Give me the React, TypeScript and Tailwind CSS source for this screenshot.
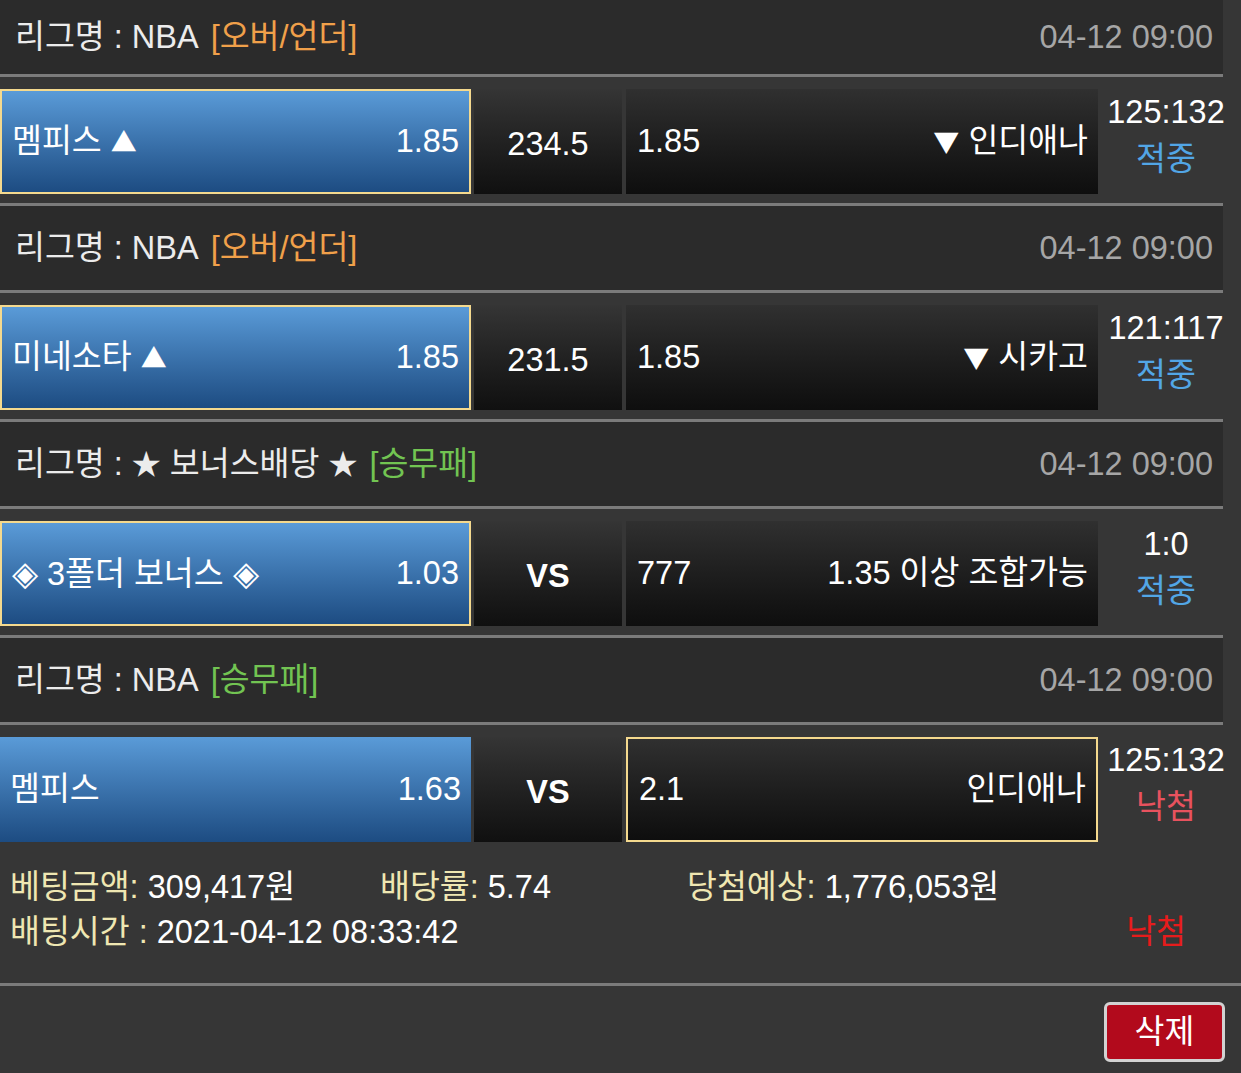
import React from "react";

type Match = {
  league: React.ReactNode;
  tag: string;
  tagColor: string;
  home: React.ReactNode;
  homeOdd: string;
  homeSel: boolean;
  mid: string;
  midBold?: boolean;
  awayOdd: string;
  away: React.ReactNode;
  awaySel: boolean;
  score: string;
  status: string;
  statusColor: string;
};

const Star = () => <span className="text-[29px]">★</span>;
const Up = () => <span className="font-['Noto_Sans_CJK_KR'] text-[26px]">▲</span>;
const Down = () => <span className="font-['Noto_Sans_CJK_KR'] text-[26px]">▼</span>;
const Dia = () => <span className="text-[34px]">◈</span>;

const matches: Match[] = [
  {
    league: "리그명 : NBA",
    tag: "[오버/언더]",
    tagColor: "text-[#f0a04a]",
    home: (
      <>
        멤피스 <Up />
      </>
    ),
    homeOdd: "1.85",
    homeSel: true,
    mid: "234.5",
    awayOdd: "1.85",
    away: (
      <>
        <Down /> 인디애나
      </>
    ),
    awaySel: false,
    score: "125:132",
    status: "적중",
    statusColor: "text-[#52a6e6]",
  },
  {
    league: "리그명 : NBA",
    tag: "[오버/언더]",
    tagColor: "text-[#f0a04a]",
    home: (
      <>
        미네소타 <Up />
      </>
    ),
    homeOdd: "1.85",
    homeSel: true,
    mid: "231.5",
    awayOdd: "1.85",
    away: (
      <>
        <Down /> 시카고
      </>
    ),
    awaySel: false,
    score: "121:117",
    status: "적중",
    statusColor: "text-[#52a6e6]",
  },
  {
    league: (
      <>
        리그명 : <Star /> 보너스배당 <Star />
      </>
    ),
    tag: "[승무패]",
    tagColor: "text-[#72c452]",
    home: (
      <>
        <Dia /> 3폴더 보너스 <Dia />
      </>
    ),
    homeOdd: "1.03",
    homeSel: true,
    mid: "VS",
    midBold: true,
    awayOdd: "777",
    away: "1.35 이상 조합가능",
    awaySel: false,
    score: "1:0",
    status: "적중",
    statusColor: "text-[#52a6e6]",
  },
  {
    league: "리그명 : NBA",
    tag: "[승무패]",
    tagColor: "text-[#72c452]",
    home: "멤피스",
    homeOdd: "1.63",
    homeSel: false,
    mid: "VS",
    midBold: true,
    awayOdd: "2.1",
    away: "인디애나",
    awaySel: true,
    score: "125:132",
    status: "낙첨",
    statusColor: "text-[#e8525e]",
  },
];

export default function App() {
  return (
    <div className="min-h-[1073px] w-full bg-[#363636] text-[32.5px] leading-none text-[#ececec] font-['Liberation_Sans','Noto_Sans_CJK_KR',sans-serif] overflow-hidden">
      <div className="w-[1223px]">
        {matches.map((m, i) => (
          <div key={i}>
            <div
              className={
                i === 0
                  ? "flex h-[77px] items-center justify-between border-b-[3px] border-[#7b7b7b] bg-[#2b2b2b] pl-[15px] pr-[10px]"
                  : "flex h-[90px] items-center justify-between border-y-[3px] border-[#7b7b7b] bg-[#2b2b2b] pl-[15px] pr-[10px]"
              }
            >
              <div className="flex items-center whitespace-nowrap text-[#ececec]">
                <span>{m.league}</span>
                <span className={"ml-[12px] " + m.tagColor}>{m.tag}</span>
              </div>
              <span className="text-[#a6a6a6]">04-12 09:00</span>
            </div>
            <div className="flex h-[126px] items-start bg-[#363636] pt-[12px]">
              <div
                className={
                  "flex h-[105px] w-[471px] shrink-0 items-center justify-between bg-gradient-to-b from-[#5a9bd8] to-[#1d4c82] px-[10px] text-white " +
                  (m.homeSel ? "border-2 border-[#f4d98e]" : "")
                }
              >
                <span className="whitespace-nowrap">{m.home}</span>
                <span>{m.homeOdd}</span>
              </div>
              <div
                className={
                  "ml-[3px] flex h-[105px] w-[148px] shrink-0 items-center justify-center bg-gradient-to-b from-[#353535] to-[#101010] pt-[6px] text-white " +
                  (m.midBold ? "font-bold" : "")
                }
              >
                {m.mid}
              </div>
              <div
                className={
                  "ml-[4px] flex h-[105px] w-[472px] shrink-0 items-center justify-between bg-gradient-to-b from-[#303030] to-[#0e0e0e] pl-[11px] pr-[10px] text-white " +
                  (m.awaySel ? "border-2 border-[#f4d98e]" : "")
                }
              >
                <span>{m.awayOdd}</span>
                <span className="whitespace-nowrap">{m.away}</span>
              </div>
              <div className="flex w-[136px] shrink-0 flex-col items-center leading-[47px]">
                <span className="text-white">{m.score}</span>
                <span className={m.statusColor}>{m.status}</span>
              </div>
            </div>
          </div>
        ))}
      </div>
      <div className="h-[135px] border-b-[3px] border-[#7b7b7b] pl-[10px] pt-[14px] leading-[45px]">
        <div className="flex whitespace-nowrap">
          <div className="w-[370px]">
            <span className="text-[#efe7b2]">베팅금액:</span>
            <span className="text-white"> 309,417원</span>
          </div>
          <div className="w-[307px]">
            <span className="text-[#efe7b2]">배당률:</span>
            <span className="text-white"> 5.74</span>
          </div>
          <div>
            <span className="text-[#efe7b2]">당첨예상:</span>
            <span className="text-white"> 1,776,053원</span>
          </div>
        </div>
        <div className="flex items-center justify-between whitespace-nowrap pr-[55px]">
          <div>
            <span className="text-[#efe7b2]">배팅시간 :</span>
            <span className="text-white"> 2021-04-12 08:33:42</span>
          </div>
          <span className="text-[#e61c1c]">낙첨</span>
        </div>
      </div>
      <div className="flex justify-end pr-[16px] pt-[16px]">
        <button className="flex h-[60px] w-[121px] items-center justify-center rounded-[6px] border-[3px] border-[#d2d2d2] bg-[#b20a1c] text-white">
          삭제
        </button>
      </div>
    </div>
  );
}
